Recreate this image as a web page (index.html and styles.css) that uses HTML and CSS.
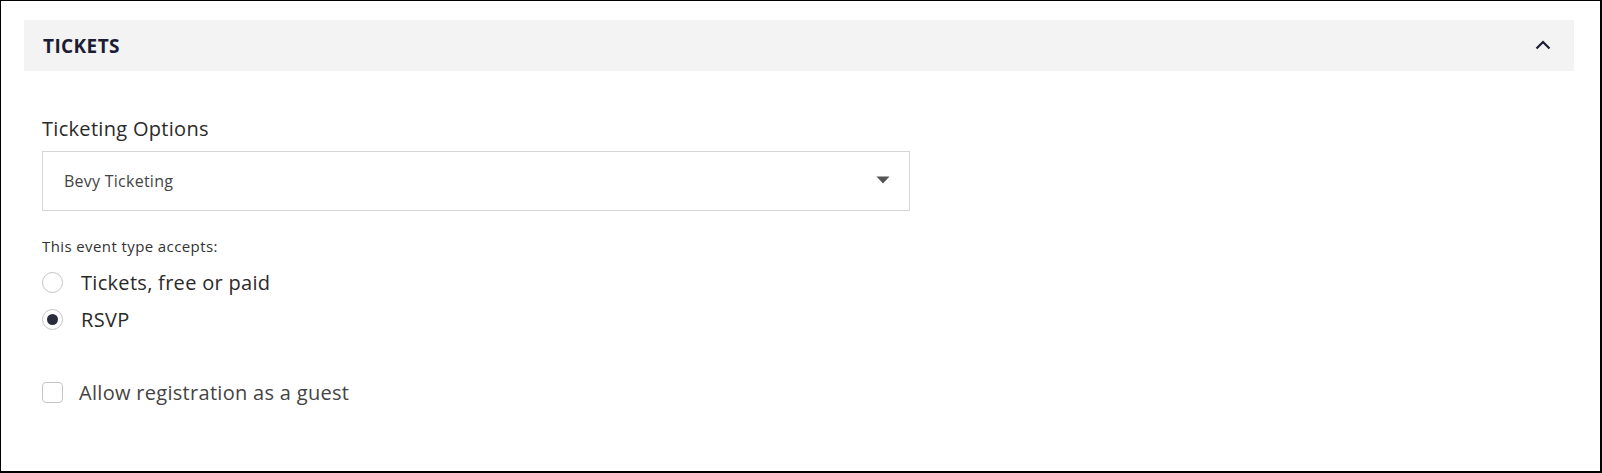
FILE: index.html
```html
<!DOCTYPE html>
<html>
<head>
<meta charset="utf-8">
<link rel="stylesheet" href="styles.css">
</head>
<body>
<div class="frame">
  <section class="panel">
    <div class="panel-header">
      <span class="panel-title">TICKETS</span>
      <svg class="chevron" width="16" height="10" viewBox="0 0 16 10"><path d="M1.5 8.5 L8 2 L14.5 8.5" fill="none" stroke="#1c1d33" stroke-width="2.2"/></svg>
    </div>
    <div class="panel-body">
      <div class="field-label">Ticketing Options</div>
      <div class="select">
        <span class="select-value">Bevy Ticketing</span>
        <svg class="caret" width="14" height="8" viewBox="0 0 14 8"><path d="M0.5 0.5 H13.5 L7 7.5 Z" fill="#555"/></svg>
      </div>
      <div class="hint">This event type accepts:</div>
      <div class="options">
        <label class="option"><span class="radio"></span><span class="opt-text">Tickets, free or paid</span></label>
        <label class="option"><span class="radio checked"></span><span class="opt-text">RSVP</span></label>
      </div>
      <label class="option check-row"><span class="checkbox"></span><span class="opt-text muted">Allow registration as a guest</span></label>
    </div>
  </section>
</div>
</body>
</html>
```

FILE: styles.css
```css
* { box-sizing: border-box; }
html, body { margin: 0; padding: 0; background: #fff; }
body { font-family: "Open Sans", "Lato", sans-serif; }

.frame {
  width: 1602px;
  height: 473px;
  border-style: solid;
  border-color: #000;
  border-width: 1px 2px 2px 1px;
  padding: 19px 26px 0 23px;
  overflow: hidden;
}

.panel-header {
  height: 51px;
  background: #f3f3f3;
  display: flex;
  align-items: center;
  justify-content: space-between;
  padding: 0 23px 0 19px;
}
.panel-title {
  font-size: 19px;
  font-weight: 700;
  color: #1c1d33;
  letter-spacing: 0.4px;
}
.chevron { display: block; margin-top: -2px; }

.panel-body {
  padding: 0 18px;
}
.field-label {
  margin-top: 45px;
  font-size: 20px;
  line-height: 25px;
  letter-spacing: 0.3px;
  color: #2b2b2b;
}
.select {
  margin-top: 10px;
  width: 868px;
  height: 60px;
  border: 1px solid #d6d6d6;
  display: flex;
  align-items: center;
  justify-content: space-between;
  padding: 0 19px 0 21px;
}
.select-value {
  font-size: 16px;
  letter-spacing: 0.25px;
  color: #444;
}
.caret { display: block; margin-top: -2px; }

.hint {
  margin-top: 26px;
  font-size: 15px;
  line-height: 18px;
  letter-spacing: 0.4px;
  color: #333;
}
.options {
  margin-top: 15px;
  display: flex;
  flex-direction: column;
  gap: 13px;
}
.option {
  display: flex;
  align-items: center;
  gap: 18px;
  height: 24px;
}
.opt-text {
  font-size: 20px;
  letter-spacing: 0.3px;
  color: #2a2a2a;
}
.opt-text.muted { color: #444; }
.radio {
  width: 21px;
  height: 21px;
  border-radius: 50%;
  border: 1px solid #c4c4c4;
  background: #fff;
  position: relative;
  flex: none;
}
.radio.checked::after {
  content: "";
  position: absolute;
  left: 4px;
  top: 4px;
  width: 11px;
  height: 11px;
  border-radius: 50%;
  background: #2a2c3d;
}
.check-row { margin-top: 49px; gap: 16px; }
.checkbox {
  width: 21px;
  height: 21px;
  border-radius: 4px;
  border: 1px solid #c4c4c4;
  background: #fff;
  flex: none;
}
```
